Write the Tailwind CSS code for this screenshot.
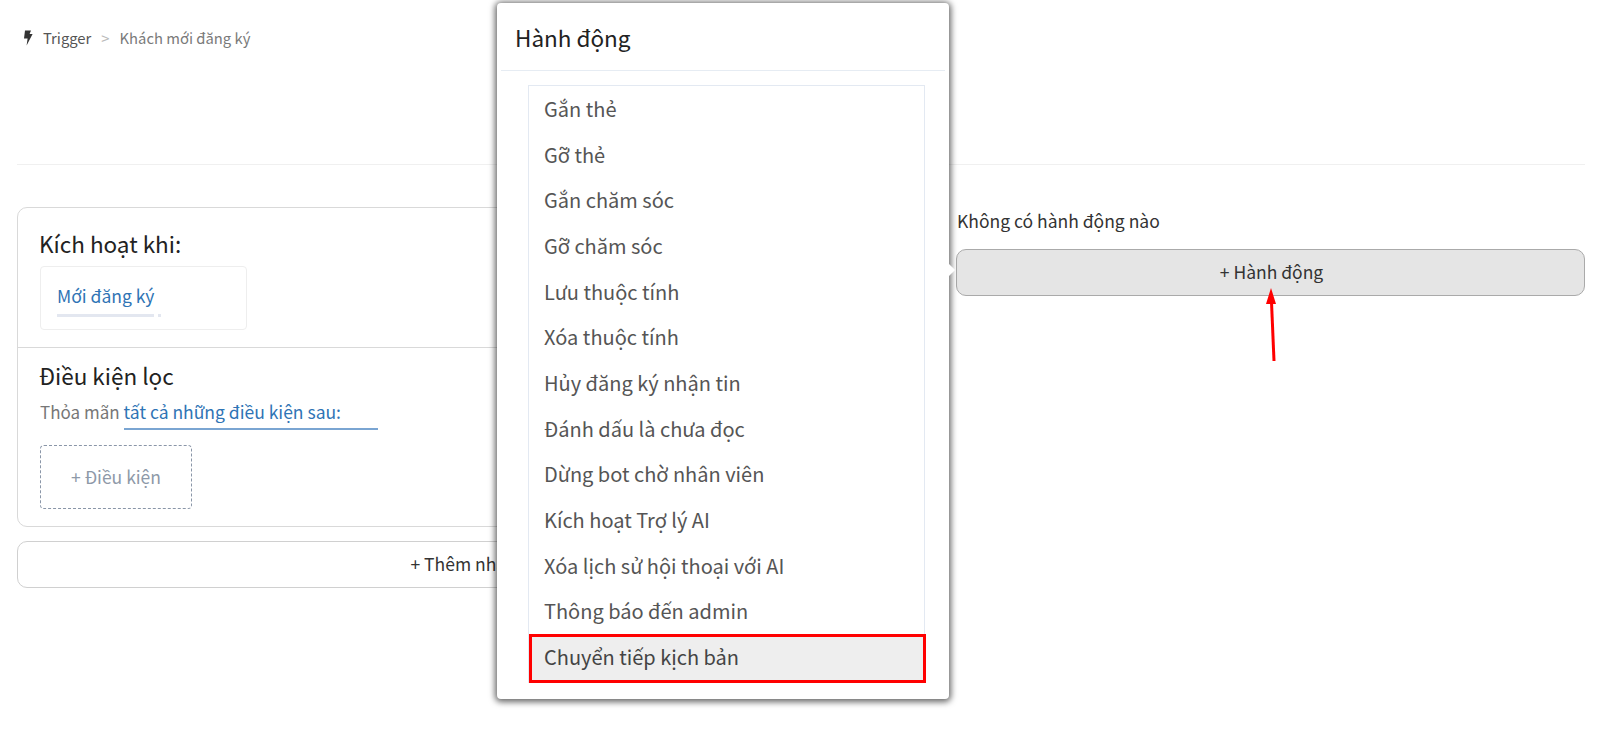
<!DOCTYPE html>
<html>
<head>
    <meta charset="utf-8" />
    <title>Trigger - Khách mới đăng ký</title>
    <script src="https://cdn.jsdelivr.net/npm/@tailwindcss/browser@4"></script>
    <meta name="viewport" content="width=device-width, initial-scale=1.0">
</head>
<body class="relative h-[754px] overflow-hidden bg-white pl-[17px] pr-[15px] font-['Noto_Sans_CJK_SC','Noto_Sans',sans-serif] text-[#333]">

<!-- Breadcrumb -->
<div class="flex h-[165px] items-start border-b border-[#f0f0f0] pt-[26px] text-[14.800px] leading-[24px]">
    <svg class="ml-[6px] mt-[4px] h-[16px] w-[10px]" viewBox="0 0 10 16"><path d="M2 0.5 L8 0.5 L6.6 4 L9.6 4 L3.6 15.5 L4.6 8.5 L1 8.5 Z" fill="#333"/></svg>
    <span class="ml-[10px] text-[#555]">Trigger</span>
    <span class="ml-[10px] text-[#bbb]">&gt;</span>
    <span class="ml-[10px] text-[#7a7a7a]">Khách mới đăng ký</span>
</div>

<!-- Main columns -->
<div class="mt-[42px] flex">
    <div class="w-[908px]">
        <div class="h-[320px] rounded-[10px] border border-[#d9d9d9]">
            <div class="h-[140px] border-b border-[#d9d9d9] pl-[21px] pr-[22px] pt-[17px]">
                <h2 class="text-[22.500px] leading-[36px] text-[#222]">Kích hoạt khi:</h2>
                <div class="ml-px mt-[5px] h-[64px] w-[207px] rounded-[4px] border border-[#eeeeee] pl-[16px] pt-[15px]">
                    <div class="flex flex-col">
                        <span class="text-[17.500px] leading-[27px] text-[#2f74b5]">Mới đăng ký</span>
                        <div class="mt-[5px] flex gap-[4px]">
                            <div class="h-[3px] w-[97px] bg-[#e3e7f0]"></div>
                            <div class="h-[3px] w-[3px] bg-[#e3e7f0]"></div>
                        </div>
                    </div>
                </div>
            </div>
            <div class="pl-[21px] pr-[22px] pt-[9px]">
                <h2 class="text-[22.500px] leading-[36px] text-[#222]">Điều kiện lọc</h2>
                <div class="ml-px mt-[5px] flex text-[17.500px] leading-[27px]">
                    <span class="text-[17px] text-[#777]">Thỏa mãn</span>
                    <span class="ml-[4px] w-[254px] border-b-2 border-[#7aa5d2] pb-[3px] text-[#2f74b5]">tất cả những điều kiện sau:</span>
                </div>
                <div class="ml-px mt-[15px] flex h-[64px] w-[152px] items-center justify-center rounded-[4px] border border-dashed border-[#8a96a8] text-[17.500px] text-[#8e99a8]">+ Điều kiện</div>
            </div>
        </div>
        <div class="mt-[14px] flex h-[47px] items-center justify-center rounded-[10px] border border-[#d0d0d0] pr-[4px] text-[17.500px] text-[#333]">+ Thêm nhánh</div>
    </div>

    <div class="ml-[31px] flex-1">
        <p class="ml-px text-[17.500px] leading-[27px] text-[#333]">Không có hành động nào</p>
        <div class="mt-[15px] flex h-[47px] items-center justify-center rounded-[10px] border border-[#aaaaaa] bg-[#e5e5e5] pl-[2px] text-[17.500px] text-[#333]">+ Hành động</div>
    </div>
</div>

<!-- Red arrow annotation -->
<svg class="absolute left-[1256px] top-[284px] h-[85px] w-[30px]" viewBox="0 0 30 85">
    <path d="M18 77 L15.500 18" stroke="#ff0000" stroke-width="3" fill="none"/>
    <path d="M15 4 L20 20 L10 20 Z" fill="#ff0000"/>
</svg>

<!-- Action modal -->
<div class="absolute left-[497px] top-[3px] h-[696px] w-[452px] rounded-[4px] bg-white shadow-[0_1px_6px_2px_rgba(0,0,0,0.6)]">
    <div class="mx-[4px] h-[68px] border-b border-[#e6ecf3] pl-[14px] pt-[16px] text-[22.500px] leading-[36px] text-[#222]">Hành động</div>
    <ul class="ml-[31px] mt-[14px] w-[397px] border-x border-t border-[#e3e9f2] text-[20px] text-[#555]">
        <li class="flex h-[45.700px] items-center pl-[15px]">Gắn thẻ</li>
        <li class="flex h-[45.700px] items-center pl-[15px]">Gỡ thẻ</li>
        <li class="flex h-[45.700px] items-center pl-[15px]">Gắn chăm sóc</li>
        <li class="flex h-[45.700px] items-center pl-[15px]">Gỡ chăm sóc</li>
        <li class="flex h-[45.700px] items-center pl-[15px]">Lưu thuộc tính</li>
        <li class="flex h-[45.700px] items-center pl-[15px]">Xóa thuộc tính</li>
        <li class="flex h-[45.700px] items-center pl-[15px]">Hủy đăng ký nhận tin</li>
        <li class="flex h-[45.700px] items-center pl-[15px]">Đánh dấu là chưa đọc</li>
        <li class="flex h-[45.700px] items-center pl-[15px]">Dừng bot chờ nhân viên</li>
        <li class="flex h-[45.700px] items-center pl-[15px]">Kích hoạt Trợ lý AI</li>
        <li class="flex h-[45.700px] items-center pl-[15px]">Xóa lịch sử hội thoại với AI</li>
        <li class="flex h-[45.700px] items-center pl-[15px]">Thông báo đến admin</li>
        <li class="-mr-[2px] flex h-[49px] items-center border-[3px] border-[#ff0000] bg-[#eeeeee] pb-[3px] pl-[12px] text-[#444]">Chuyển tiếp kịch bản</li>
    </ul>
</div>

<!-- Notch of the popover -->
<div class="absolute left-[943px] top-[265px] h-[10px] w-[10px] rotate-45 bg-white"></div>

</body>
</html>
